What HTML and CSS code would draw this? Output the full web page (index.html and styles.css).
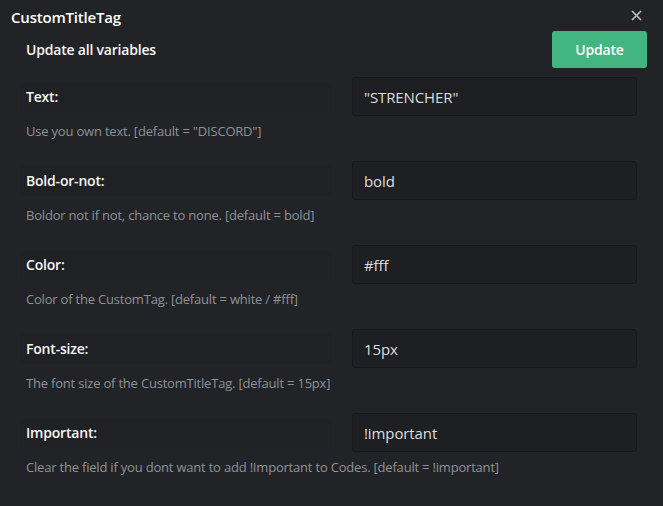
FILE: index.html
```html
<!DOCTYPE html>
<html>
<head>
<meta charset="utf-8">
<link rel="stylesheet" href="styles.css">
</head>
<body>
<div class="modal">
  <div class="header">
    <div class="title">CustomTitleTag</div>
    <svg class="close" width="11" height="11" viewBox="0 0 11 11"><path d="M1 1L10 10M10 1L1 10" stroke="#b9bbbe" stroke-width="1.7"/></svg>
  </div>
  <div class="top">
    <div class="top-label">Update all variables</div>
    <button class="btn">Update</button>
  </div>
  <div class="field">
    <div class="field-row"><div class="label">Text:</div><div class="input">"STRENCHER"</div></div>
    <div class="desc">Use you own text. [default = "DISCORD"]</div>
  </div>
  <div class="field">
    <div class="field-row"><div class="label">Bold-or-not:</div><div class="input">bold</div></div>
    <div class="desc">Boldor not if not, chance to none. [default = bold]</div>
  </div>
  <div class="field">
    <div class="field-row"><div class="label">Color:</div><div class="input">#fff</div></div>
    <div class="desc">Color of the CustomTag. [default = white / #fff]</div>
  </div>
  <div class="field">
    <div class="field-row"><div class="label">Font-size:</div><div class="input">15px</div></div>
    <div class="desc">The font size of the CustomTitleTag. [default = 15px]</div>
  </div>
  <div class="field">
    <div class="field-row"><div class="label">Important:</div><div class="input">!important</div></div>
    <div class="desc">Clear the field if you dont want to add !Important to Codes. [default = !important]</div>
  </div>
</div>
</body>
</html>
```
FILE: styles.css
```css
html, body {
  margin: 0;
  padding: 0;
  background: #222326;
}
body {
  font-family: "Open Sans", "Noto Sans", sans-serif;
  width: 663px;
  height: 506px;
  overflow: hidden;
}
.header {
  height: 31px;
  display: flex;
  align-items: center;
  justify-content: space-between;
  padding: 2px 21px 0 11px;
  box-sizing: border-box;
}
.title {
  color: #ffffff;
  font-size: 15px;
  font-weight: 600;
  letter-spacing: -0.2px;
}
.close {
  display: block;
  margin-top: -3px;
}
.top {
  height: 37px;
  display: flex;
  align-items: center;
  justify-content: space-between;
  padding: 0 16px 0 26px;
  margin-bottom: 9px;
}
.top-label {
  color: #f6f6f7;
  font-size: 14px;
  font-weight: 600;
  letter-spacing: -0.2px;
}
.btn {
  width: 95px;
  height: 37px;
  border: none;
  border-radius: 3px;
  background: #43b581;
  color: #ffffff;
  font-family: inherit;
  font-size: 14px;
  font-weight: 600;
  letter-spacing: -0.2px;
}
.field {
  padding: 0 26px;
  height: 84px;
}
.field-row {
  display: flex;
  align-items: center;
  height: 39px;
}
.label {
  flex: 1;
  height: 30px;
  display: flex;
  align-items: center;
  margin-left: -6px;
  padding-left: 6px;
  background: #202124;
  color: #f6f6f7;
  font-size: 14px;
  font-weight: 600;
  letter-spacing: -0.2px;
}
.input {
  width: 285px;
  height: 39px;
  margin-left: 20px;
  box-sizing: border-box;
  padding: 0 11px;
  display: flex;
  align-items: center;
  background: #1e1f22;
  border: 1px solid #18191c;
  border-radius: 3px;
  color: #dcddde;
  font-size: 15px;
  letter-spacing: -0.1px;
}
.desc {
  margin-top: 7px;
  line-height: 16px;
  color: #8e9297;
  font-size: 13px;
  letter-spacing: -0.2px;
}
```
